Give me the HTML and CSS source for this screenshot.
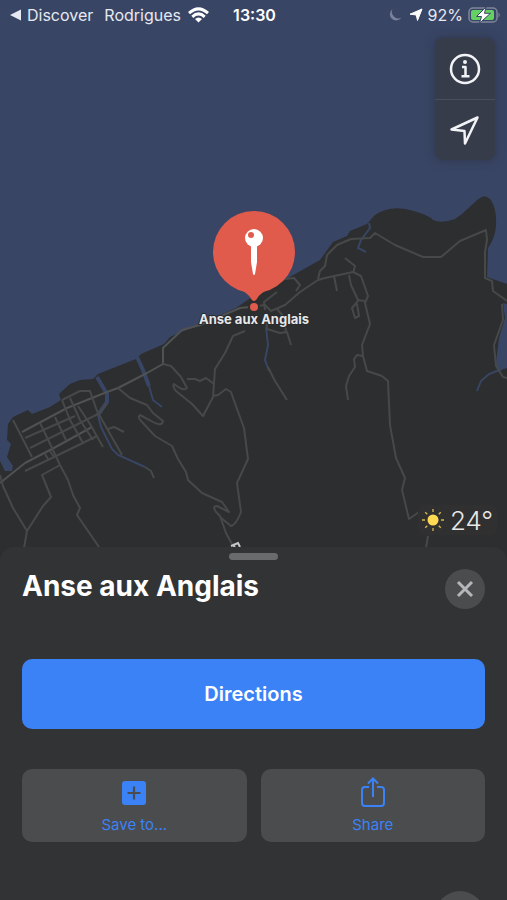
FILE: index.html
```html
<!DOCTYPE html>
<html lang="en">
  <head>
    <meta charset="UTF-8" />
    <meta name="viewport" content="width=device-width, initial-scale=1" />
    <title>Anse aux Anglais</title>
    <link rel="stylesheet" href="styles.css">
  </head>

  <body>
    <main class="map">
      <svg class="map-canvas" viewBox="0 0 507 560" preserveAspectRatio="xMidYMin slice" aria-hidden="true">
        <!-- Land -->
        <path class="land" d="M0 461 L5 471 L12 471 L13 466 L7 457 L11 444 L7 440 L8 424 L13 417 L28 410 L32 414 L50 407 L61 400 L59 394 L70 384 L80 380 L93 379 L98 374 L136 359 L141 354 L164 344 L170 337 L198 325 L236 308 L252 297 L262 293 L272 287 L320 260 L333 242 L347 236 L350 231 L367 224 L375 215 Q390 205 410 210 Q429 215 433 220 Q441 224 455 219 L462 214 L474 203 Q483 194 487 197 L491 200 Q497 210 496 226 Q495 238 488 248 L487 277 L507 284 V560 H0 Z" />
        <path class="water" d="M503 303 L507 304 V368 L497 371 L496 362 L499 338 L505 318 Z" />

        <g class="river">
          <path class="river-wide" d="M97 377 L107 394 L107 402 L98 415" />
          <path d="M98 415 L101 427 L112 449 L118 455 L145 467" />
          <path class="river-wide" d="M137 357 L143 370 L149 386" />
          <path d="M149 386 L153 400 L162 407" />
          <path d="M369 223 L370 228 L361 240 L358 248 L366 252" />
          <path d="M266 327 L268 345 L265 360 L269 371" />
          <path d="M502 369 L489 374 L481 381 L477 391" />
        </g>

        <g class="road">
          <!-- Coast road -->
          <path class="road-main" d="M0 483 L25 463 L52 449 L92 427" />
          <path class="road-main" d="M22 432 L67 408 L107 392 L118 388 L147 373 L163 364 V348 L182 330 L200 325 L240 308 L250 307" />
          <path d="M251 307 L265 305 L271 311 L285 305 L300 292 L318 280 L325 278 L353 272 L361 276 L368 296 L365 303 L370 324 L362 345 L363 356 L367 371 L382 376 L388 381 L390 425 L396 458 L405 478 L402 490 L409 519 L419 512" />
          <path d="M285 279 L294 278 L300 285 L296 291 M265 310 L264 302 L277 292 M318 279 L320 271 L325 266 L327 255 L337 245 L351 239 L370 238 L375 233 L395 245 L423 257 H441 L460 241 L486 230 L487 240 L485 252 V278 L492 281 L493 291 L507 301" />
          <path d="M502 304 L503 320 L494 345 L496 366 L503 377 L507 378" />
          <path d="M363 356 L357 355 L354 359 L355 367 L349 376 L346 386 L348 400 M345 258 L355 266 L353 273 M334 276 L337 291" />
          <path d="M349 275 L351 285 L358 300 L365 301 M358 301 L352 308 L355 318 L359 316 L357 304" />
          <path d="M428 536 L426 548" />
          <!-- Port Mathurin -->
          <path d="M25 438 L75 416 M30 448 L100 413 L107 403 M25 471 L52 458 L97 436 M45 454 L48 459 M50 451 L54 457" />
          <path d="M13 420 L32 457 M40 423 L53 450 L60 465 L68 480 L73 495 L80 508 L77 515 L99 547 M55 417 L66 440 M62 400 L70 420 L83 443 M70 398 L80 420 L93 440 M78 406 L90 424 L103 447 M62 400 L80 391 H90 L97 411 L122 455 M108 429 L114 427 L124 432" />
          <path d="M0 475 L3 486 L13 508 L27 531 M24 548 L27 531 L43 506 L51 497 L42 475 L60 465" />
          <!-- Inland -->
          <path d="M118 388 L130 398 L147 405 L153 413 L163 421 Q162 427 153 422 L140 415 Q137 417 142 422 L155 436 L172 446 L178 459 L186 472 L188 480 L202 493 L222 502 L229 512 L217 506 Q212 506 216 512 L220 516 L226 533 L232 544" />
          <path d="M163 364 L171 366 L181 377 L187 388 Q184 392 174 384 Q172 386 176 391 L192 404 L203 416 L213 397 L215 369 L225 353 L233 336 L245 331 M187 379 L195 379 L200 381 L206 378 L214 384" />
          <path d="M213 396 L218 395 L226 389 L231 392 L237 409 L244 428 L248 459 L237 483 L241 512 Q236 525 231 526 L220 517" />
          <path d="M266 316 L267 329 L280 333 L287 332 L291 345 M286 332 L284 317 L277 309 M268 367 L275 381 L287 400 M145 467 L151 471 L154 478" />
        </g>
        <path class="map-mark" d="M231 546 L238 543 L240 547 M233 544 L235 548" />

        <!-- Selected place -->
        <circle class="pin-halo" cx="254" cy="307" r="6" />
        <circle class="pin" cx="254" cy="252" r="41" />
        <path class="pin" d="M236 286 Q248 294 250 297 Q252 301 254 301 Q256 301 258 297 Q260 294 272 286 Z" />
        <path class="pin-stem" d="M251 245 H257 V262 L255 274 Q254 276 253 274 L251 262 Z" />
        <circle class="pin-head" cx="254" cy="238" r="9" />
        <circle class="pin" cx="251" cy="235" r="3" />
        <circle class="pin" cx="254" cy="307" r="4" />
        <text class="place-label" x="254" y="324">Anse aux Anglais</text>
      </svg>

      <header class="status-bar">
        <div class="status-left">
          <a class="back-link" href="#">
            <svg width="11" height="12" viewBox="0 0 11 12" aria-hidden="true"><path d="M0 6 L11 .5 V11.500 Z" fill="currentColor" /></svg>
            Discover
          </a>
          <span>Rodrigues</span>
          <svg class="wifi" width="21" height="16" viewBox="0 0 21 16" aria-hidden="true">
            <path d="M1 6.200 Q10.500 -2.500 20 6.200 M4.300 9.800 Q10.500 4 16.700 9.800" fill="none" stroke="currentColor" stroke-width="3" />
            <path d="M7 12 Q10.500 9 14 12 L10.500 15.500 Z" fill="currentColor" />
          </svg>
        </div>
        <time class="status-time">13:30</time>
        <div class="status-right">
          <svg class="moon" width="14" height="14" viewBox="0 0 14 14" aria-hidden="true"><path d="M4.500 1 A6.300 6.300 0 1 0 13.500 9.500 A6.500 6.500 0 0 1 4.500 1 Z" fill="currentColor" /></svg>
          <svg class="location" width="14" height="14" viewBox="0 0 14 14" aria-hidden="true"><path d="M13 1 L8.500 12.500 L7.300 7 L1 6.200 Z" /></svg>
          <span>92%</span>
          <svg class="battery" width="33" height="18" viewBox="0 0 33 18" aria-hidden="true">
            <rect x="1" y="2" width="28" height="14" rx="4" fill="none" stroke="#7f8799" stroke-width="1.500" />
            <path d="M30.500 6.500 Q33 9 30.500 11.500 Z" fill="#7f8799" />
            <rect x="3" y="4" width="23" height="10" rx="2" fill="#64d163" />
            <path d="M18 1 L8.500 10.500 H13.500 L11.500 17.200 L22.500 7.300 H16.500 Z" fill="#fff" stroke="#3b4563" stroke-width="1" />
          </svg>
        </div>
      </header>

      <div class="map-controls">
        <button type="button" aria-label="Map information">
          <svg width="32" height="32" viewBox="0 0 32 32" aria-hidden="true">
            <circle cx="16" cy="16" r="14" />
            <path d="M13 14 H16.500 V23 M12.500 23.200 H20.500" />
            <circle class="dot" cx="16" cy="9" r="2" />
          </svg>
        </button>
        <button type="button" aria-label="Show my location">
          <svg width="32" height="32" viewBox="0 0 32 32" aria-hidden="true">
            <path d="M28.500 3.500 L2.500 15.500 L15.500 17 L16 29.500 Z" />
          </svg>
        </button>
      </div>

      <div class="weather">
        <svg width="22" height="22" viewBox="0 0 22 22" aria-hidden="true">
          <circle cx="11" cy="11" r="5.500" fill="#ffd952" />
          <path d="M11 0 V3 M11 19 V22 M0 11 H3 M19 11 H22 M3.200 3.200 L5.300 5.300 M16.700 16.700 L18.800 18.800 M3.200 18.800 L5.300 16.700 M16.700 5.300 L18.800 3.200" stroke="#d3b84c" stroke-width="1.300" />
        </svg>
        <span>24°</span>
      </div>
    </main>

    <section class="sheet">
      <div class="grabber"></div>
      <div class="sheet-header">
        <h1>Anse aux Anglais</h1>
        <button class="close-btn" type="button" aria-label="Close">
          <svg width="18" height="18" viewBox="0 0 18 18" aria-hidden="true"><path d="M2 2 L16 16 M16 2 L2 16" /></svg>
        </button>
      </div>
      <button class="directions-btn" type="button">Directions</button>
      <div class="actions">
        <button class="action-btn" type="button">
          <svg width="32" height="32" viewBox="0 0 32 32" aria-hidden="true">
            <rect x="4" y="4" width="24" height="24" rx="3" fill="#3b82f7" />
            <path d="M16 9.500 V22.500 M9.500 16 H22.500" stroke="#4b4c4d" stroke-width="2.200" />
          </svg>
          Save to...
        </button>
        <button class="action-btn" type="button">
          <svg width="32" height="32" viewBox="0 0 32 32" aria-hidden="true">
            <path d="M12 10 H8 Q5 10 5 13 V26 Q5 29 8 29 H24 Q27 29 27 26 V13 Q27 10 24 10 H20 M16 20 V2 M11 6.500 L16 1.500 L21 6.500" fill="none" stroke="#3b82f7" stroke-width="2" />
          </svg>
          Share
        </button>
      </div>
      <div class="next-row"><span class="next-icon"></span></div>
    </section>
  </body>
</html>
```
FILE: styles.css
```css
* {
  box-sizing: border-box;
}

body {
  display: flex;
  flex-direction: column;
  height: 100vh;
  margin: 0;
  overflow: hidden;
  background: #323335;
  color: #fff;
  font-family: Inter, "Liberation Sans", sans-serif;
}

button {
  border: 0;
  padding: 0;
  font-family: inherit;
  cursor: pointer;
}

svg {
  display: block;
  flex: none;
}

/* Map */
.map {
  position: relative;
  flex: 1;
  background: #394564;
}

.map-canvas {
  position: absolute;
  top: 0;
  left: 0;
  width: 100%;
  height: calc(100% + 13px);
}

.land {
  fill: #2c2e2f;
}

.water {
  fill: #394564;
}

.river {
  fill: none;
  stroke: #394564;
  stroke-width: 2;
}

.river-wide {
  stroke-width: 4;
}

.road {
  fill: none;
  stroke: #474949;
  stroke-width: 2;
  stroke-linejoin: round;
}

.road-main {
  stroke: #505151;
}

.map-mark {
  fill: none;
  stroke: #c8c8c8;
  stroke-width: 2;
}

.pin {
  fill: #e15b4c;
}

.pin-halo {
  fill: #2c2e2f;
}

.pin-head,
.pin-stem {
  fill: #fff;
}

.place-label {
  fill: #e8e8e8;
  stroke: #292b2d;
  stroke-width: 2px;
  paint-order: stroke;
  font-size: 13px;
  font-weight: 700;
  text-anchor: middle;
}

/* Status bar */
.status-bar {
  position: relative;
  display: grid;
  grid-template-columns: 1fr auto 1fr;
  align-items: center;
  height: 30px;
  padding: 0 8px 0 10px;
  color: #e6e9f2;
  font-size: 16px;
  line-height: 20px;
}

.status-left,
.status-right {
  display: flex;
  align-items: center;
}

.status-left {
  gap: 7px;
}

.back-link {
  display: flex;
  align-items: center;
  gap: 6px;
  margin-right: 4px;
  color: inherit;
  text-decoration: none;
}

.wifi {
  color: #fff;
}

.status-time {
  color: #fff;
  font-weight: 600;
}

.status-right {
  justify-content: flex-end;
  gap: 5px;
}

.status-right .battery {
  margin-right: -2px;
}

.moon {
  margin-right: 2px;
  color: #78819a;
}

.location {
  fill: #fff;
  stroke: #fff;
  stroke-linejoin: round;
}

/* Floating controls */
.map-controls {
  position: absolute;
  top: 38px;
  right: 12px;
  width: 60px;
  border-radius: 8px;
  background: #373c4b;
  box-shadow: 0 0 10px rgba(35, 40, 58, 0.5);
}

.map-controls button {
  display: flex;
  align-items: center;
  justify-content: center;
  width: 100%;
  height: 61px;
  background: none;
}

.map-controls button + button {
  border-top: 1px solid #4b4f5c;
}

.map-controls svg {
  fill: none;
  stroke: #f2f3f6;
  stroke-width: 2.5;
  stroke-linejoin: round;
}

.map-controls .dot {
  fill: #f2f3f6;
  stroke: none;
}

.weather {
  position: absolute;
  right: 10px;
  bottom: 12px;
  display: flex;
  align-items: center;
  gap: 6px;
  height: 30px;
  padding: 0 4px;
  border-radius: 6px;
  background: #303031;
  color: #e8e8e8;
  font-size: 26px;
  font-weight: 300;
}

/* Bottom sheet */
.sheet {
  position: relative;
  padding: 6px 22px 0;
  border-radius: 14px 14px 0 0;
  background: #323335;
}

.grabber {
  width: 49px;
  height: 7px;
  margin: 0 auto;
  border-radius: 4px;
  background: #6a6b6c;
}

.sheet-header {
  display: flex;
  justify-content: space-between;
  height: 99px;
  padding-top: 9px;
}

h1 {
  margin: 0;
  font-size: 28px;
  font-weight: 700;
  line-height: 34px;
}

.close-btn {
  display: flex;
  align-items: center;
  justify-content: center;
  width: 40px;
  height: 40px;
  border-radius: 50%;
  background: #4b4c4e;
}

.close-btn svg {
  fill: none;
  stroke: #b5b6ba;
  stroke-width: 3;
}

.directions-btn {
  width: 100%;
  height: 70px;
  border-radius: 10px;
  background: #3b82f7;
  color: #fff;
  font-size: 20px;
  font-weight: 600;
}

.actions {
  display: grid;
  grid-template-columns: 1fr 1fr;
  gap: 14px;
  margin-top: 40px;
}

.action-btn {
  display: flex;
  flex-direction: column;
  align-items: center;
  gap: 6px;
  height: 73px;
  padding-top: 8px;
  border-radius: 10px;
  background: #4b4c4d;
  color: #3b82f7;
  font-size: 15px;
  line-height: 20px;
}

.next-row {
  display: flex;
  justify-content: flex-end;
  height: 58px;
  padding-top: 49px;
  overflow: hidden;
}

.next-icon {
  flex: none;
  width: 50px;
  height: 50px;
  border-radius: 50%;
  background: #4b4c4e;
}
```
